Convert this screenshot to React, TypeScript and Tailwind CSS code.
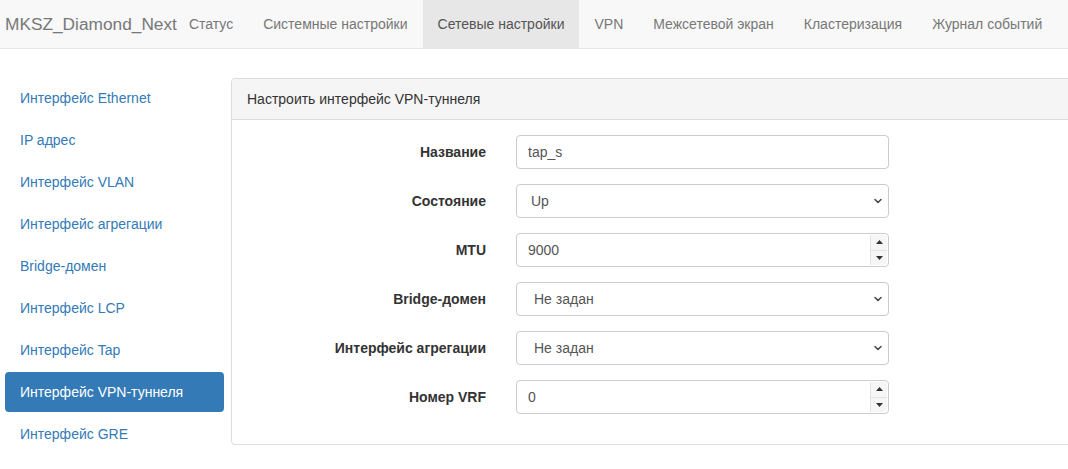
import { ChevronDown } from 'lucide-react';

const navItems = [
  'Статус',
  'Системные настройки',
  'Сетевые настройки',
  'VPN',
  'Межсетевой экран',
  'Кластеризация',
  'Журнал событий',
];

const sideItems = [
  'Интерфейс Ethernet',
  'IP адрес',
  'Интерфейс VLAN',
  'Интерфейс агрегации',
  'Bridge-домен',
  'Интерфейс LCP',
  'Интерфейс Tap',
  'Интерфейс VPN-туннеля',
  'Интерфейс GRE',
];

type Field = { label: string; kind: 'text' | 'select' | 'number'; value: string };

const fields: Field[] = [
  { label: 'Название', kind: 'text', value: 'tap_s' },
  { label: 'Состояние', kind: 'select', value: 'Up' },
  { label: 'MTU', kind: 'number', value: '9000' },
  { label: 'Bridge-домен', kind: 'select', value: 'Не задан' },
  { label: 'Интерфейс агрегации', kind: 'select', value: 'Не задан' },
  { label: 'Номер VRF', kind: 'number', value: '0' },
];

const Spinner = () => (
  <div className="absolute right-[1px] top-[1px] bottom-[1px] w-[17px] flex flex-col border-l border-[#e3e3e3] bg-[#f6f6f6] rounded-r-[3px]">
    <div className="flex-1 flex items-center justify-center border-b border-[#e3e3e3]">
      <svg width="7" height="4" viewBox="0 0 7 4">
        <path d="M0 4 L3.5 0 L7 4 Z" fill="#333" />
      </svg>
    </div>
    <div className="flex-1 flex items-center justify-center">
      <svg width="7" height="4" viewBox="0 0 7 4">
        <path d="M0 0 L3.5 4 L7 0 Z" fill="#333" />
      </svg>
    </div>
  </div>
);

const FieldControl = ({ field }: { field: Field }) => {
  if (field.kind === 'select') {
    return (
      <div className="relative w-[373px] h-[34px] border border-[#ccc] rounded-[4px] bg-white flex items-center">
        <span className={field.value === 'Up' ? 'pl-[14px] text-[#555]' : 'pl-[17px] text-[#555]'}>{field.value}</span>
        <ChevronDown className="absolute right-[4px] top-1/2 -translate-y-1/2 w-[12px] h-[12px] text-[#444]" strokeWidth={3} />
      </div>
    );
  }
  return (
    <div className="relative w-[373px] h-[34px] border border-[#ccc] rounded-[4px] bg-white flex items-center">
      <span className="pl-[11px] text-[#555]">{field.value}</span>
      {field.kind === 'number' && <Spinner />}
    </div>
  );
};

export default function App() {
  return (
    <div
      className="w-[1068px] h-[469px] overflow-hidden bg-white text-[14px] leading-[20px] text-[#333]"
      style={{ fontFamily: '"Liberation Sans", Arial, sans-serif' }}
    >
      {/* Navbar */}
      <div className="flex h-[49px] bg-[#f8f8f8] border-b border-[#e7e7e7]">
        <div className="pl-[5px] flex items-center text-[17.3px] text-[#777] -mr-[3px]">
          MKSZ_Diamond_Next
        </div>
        {navItems.map(item => (
          <div
            key={item}
            className={
              item === 'Сетевые настройки'
                ? 'px-[15px] flex items-center text-[#555] bg-[#e7e7e7]'
                : 'px-[15px] flex items-center text-[#777]'
            }
          >
            {item}
          </div>
        ))}
      </div>

      <div className="flex pt-[29px]">
        {/* Sidebar */}
        <div className="ml-[5px] w-[219px] shrink-0 flex flex-col gap-[2px]">
          {sideItems.map(item => (
            <div
              key={item}
              className={
                item === 'Интерфейс VPN-туннеля'
                  ? 'h-[40px] px-[15px] flex items-center rounded-[4px] bg-[#337ab7] text-white'
                  : 'h-[40px] px-[15px] flex items-center text-[#337ab7]'
              }
            >
              {item}
            </div>
          ))}
        </div>

        {/* Panel */}
        <div className="ml-[7px] w-[900px] shrink-0 self-start border border-[#ddd] rounded-[4px]">
          <div className="h-[41px] px-[15px] flex items-center bg-[#f5f5f5] border-b border-[#ddd] rounded-t-[4px]">
            Настроить интерфейс VPN-туннеля
          </div>
          <div className="p-[15px] flex flex-col gap-[15px] pb-[30px]">
            {fields.map(f => (
              <div key={f.label} className="flex items-center">
                <div className="w-[239px] text-right font-bold">{f.label}</div>
                <div className="ml-[30px]">
                  <FieldControl field={f} />
                </div>
              </div>
            ))}
          </div>
        </div>
      </div>
    </div>
  );
}
